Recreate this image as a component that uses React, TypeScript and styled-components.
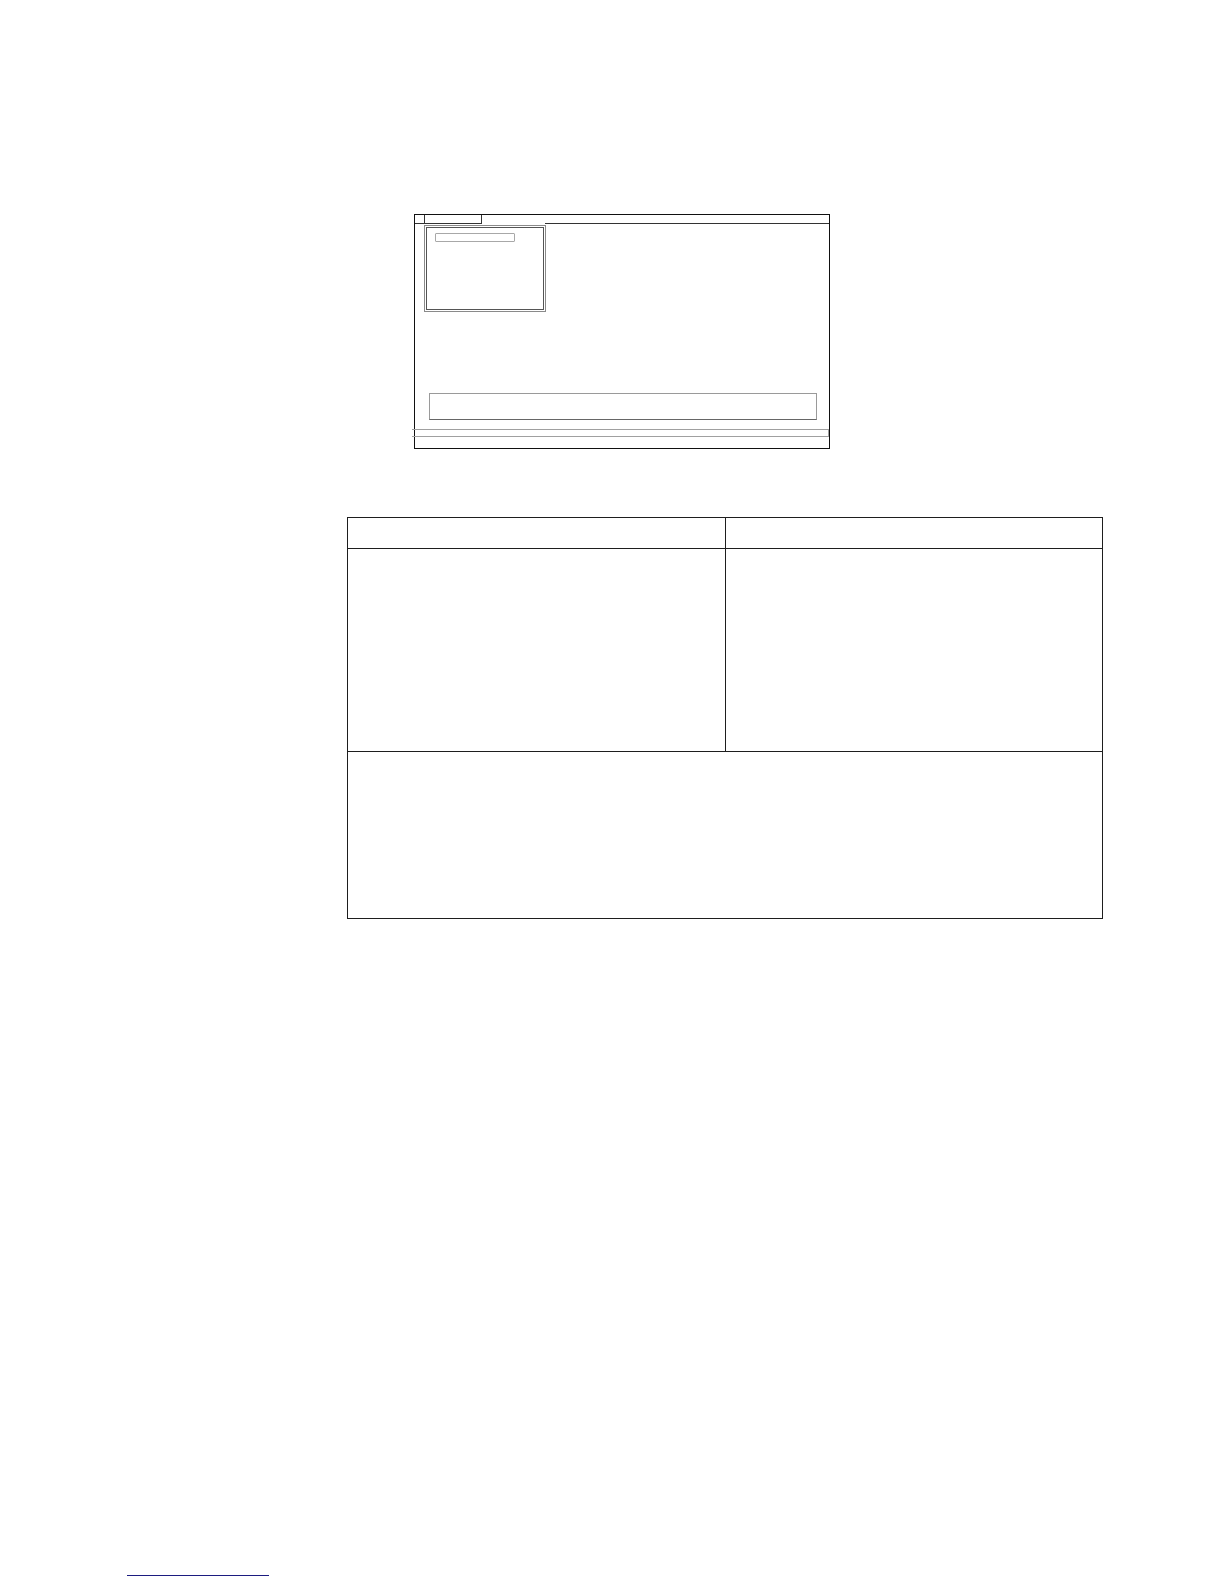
import styled, { createGlobalStyle } from 'styled-components';

const GlobalStyle = createGlobalStyle`
  html, body {
    margin: 0;
    padding: 0;
    background: #fff;
    font-family: 'Liberation Sans', Arial, sans-serif;
  }
`;

const Page = styled.div`
  width: 1224px;
  height: 1584px;
  box-sizing: border-box;
  padding-top: 214px;
  display: flex;
  flex-direction: column;
  align-items: flex-start;
`;

const ScreenWindow = styled.div`
  margin-left: 414px;
  width: 416px;
  height: 235px;
  box-sizing: border-box;
  border: 1px solid #111;
  display: flex;
  flex-direction: column;
`;

const TabStrip = styled.div`
  display: flex;
  height: 9px;
`;

const StripLine = styled.div<{ $width?: number }>`
  flex: ${(p) => (p.$width ? `0 0 ${p.$width}px` : '1')};
  border-bottom: 1px solid #333;
`;

const Tab = styled.div`
  flex: 0 0 58px;
  box-sizing: border-box;
  border: 1px solid #333;
  border-top: none;
`;

const TabGap = styled.div`
  flex: 0 0 63px;
`;

const ListPanel = styled.div`
  margin: 1px 0 0 9px;
  width: 122px;
  height: 87px;
  box-sizing: border-box;
  border: 1px solid #8a8a8a;
  padding: 1px;
`;

const ListInner = styled.div`
  height: 100%;
  box-sizing: border-box;
  border: 1px solid #555;
  padding: 5px 0 0 8px;
`;

const SmallField = styled.div`
  width: 80px;
  height: 9px;
  box-sizing: border-box;
  border: 1px solid #a8a8a8;
  border-radius: 1px;
`;

const InputBox = styled.div`
  margin: 81px 12px 0 14px;
  height: 27px;
  box-sizing: border-box;
  border: 1px solid #9a9a9a;
  border-bottom-color: #666;
`;

const StatusBar = styled.div`
  margin: 9px 0 0 -3px;
  height: 8px;
  box-sizing: border-box;
  border: 1px solid #a0a0a0;
  border-left: none;
`;

const InfoTable = styled.table`
  margin: 68px 0 0 347px;
  width: 756px;
  border-collapse: collapse;
  table-layout: fixed;
`;

const HeadCell = styled.th<{ $width?: number }>`
  width: ${(p) => (p.$width ? `${p.$width}px` : 'auto')};
  height: 30px;
  border: 1px solid #1e1e1e;
  padding: 0;
`;

const BodyCell = styled.td<{ $height: number }>`
  height: ${(p) => p.$height}px;
  border: 1px solid #1e1e1e;
  padding: 0;
`;

const Footer = styled.div`
  margin-top: auto;
  margin-left: 127px;
  margin-bottom: 8px;
  width: 142px;
  height: 1px;
  background: #1c1c80;
`;

export default function App() {
  return (
    <>
      <GlobalStyle />
      <Page>
        <ScreenWindow>
          <TabStrip>
            <StripLine $width={9} />
            <Tab />
            <TabGap />
            <StripLine />
          </TabStrip>
          <ListPanel>
            <ListInner>
              <SmallField />
            </ListInner>
          </ListPanel>
          <InputBox />
          <StatusBar />
        </ScreenWindow>

        <InfoTable>
          <thead>
            <tr>
              <HeadCell $width={377} />
              <HeadCell />
            </tr>
          </thead>
          <tbody>
            <tr>
              <BodyCell $height={202} />
              <BodyCell $height={202} />
            </tr>
            <tr>
              <BodyCell $height={166} colSpan={2} />
            </tr>
          </tbody>
        </InfoTable>

        <Footer />
      </Page>
    </>
  );
}
